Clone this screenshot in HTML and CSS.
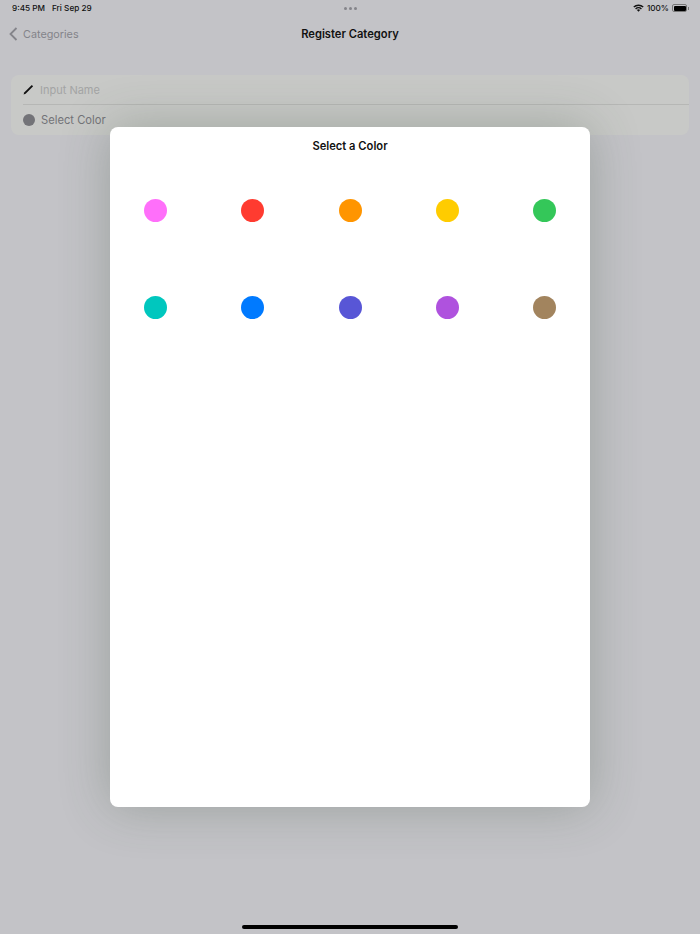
FILE: index.html
```html
<!DOCTYPE html>
<html lang="en">
<head>
  <meta charset="UTF-8">
  <meta name="viewport" content="width=device-width, initial-scale=1.0">
  <title>Register Category</title>
  <link rel="stylesheet" href="styles.css">
</head>
<body>
  <div class="screen">
    <div class="status-bar">
      <div class="status-left">
        <span>9:45 PM</span>
        <span>Fri Sep 29</span>
      </div>
      <div class="status-dots">
        <span class="dot"></span>
        <span class="dot"></span>
        <span class="dot"></span>
      </div>
      <div class="status-right">
        <svg class="wifi" width="11" height="8" viewBox="0 0 11 8">
          <path d="M0.3 2.6 A7.4 7.4 0 0 1 10.7 2.6 L9.7 3.6 A6 6 0 0 0 1.3 3.6 Z" fill="#111"/>
          <path d="M2.1 4.4 A4.9 4.9 0 0 1 8.9 4.4 L7.9 5.4 A3.5 3.5 0 0 0 3.1 5.4 Z" fill="#111"/>
          <path d="M3.9 6.1 A2.3 2.3 0 0 1 7.1 6.1 L5.5 7.8 Z" fill="#111"/>
        </svg>
        <span>100%</span>
        <div class="battery"><div class="battery-fill"></div></div>
        <div class="battery-tip"></div>
      </div>
    </div>

    <div class="nav-bar">
      <div class="nav-back">
        <svg width="9" height="14" viewBox="0 0 9 14">
          <path d="M7.5 1 L1.5 7 L7.5 13" fill="none" stroke="#84848a" stroke-width="1.8"/>
        </svg>
        <span>Categories</span>
      </div>
      <div class="nav-title">Register Category</div>
    </div>

    <div class="form-group">
      <div class="form-row">
        <svg class="pencil" width="11" height="11" viewBox="0 0 11 11">
          <path d="M0.6 10.4 L1.2 8.4 L8.8 0.9 L10.1 2.2 L2.6 9.8 Z" fill="#111"/>
        </svg>
        <span class="placeholder">Input Name</span>
      </div>
      <div class="form-row">
        <span class="color-dot"></span>
        <span class="form-label">Select Color</span>
      </div>
    </div>

    <div class="home-indicator"></div>
  </div>

  <div class="modal">
    <div class="modal-title">Select a Color</div>
    <div class="swatches">
      <div class="swatch pink"></div>
      <div class="swatch red"></div>
      <div class="swatch orange"></div>
      <div class="swatch yellow"></div>
      <div class="swatch green"></div>
      <div class="swatch teal"></div>
      <div class="swatch blue"></div>
      <div class="swatch indigo"></div>
      <div class="swatch purple"></div>
      <div class="swatch brown"></div>
    </div>
  </div>
</body>
</html>
```

FILE: styles.css
```css
body {
  margin: 0;
  padding: 0;
  background-color: #c3c3c7;
  color: #111;
  font-family: 'Inter', 'Liberation Sans', sans-serif;
  height: 934px;
  overflow: hidden;
}

.screen {
  height: 934px;
  display: flex;
  flex-direction: column;
}

.status-bar {
  height: 16px;
  padding: 0 12px;
  display: grid;
  grid-template-columns: 1fr auto 1fr;
  align-items: center;
  font-size: 8.2px;
  font-weight: 500;
}

.status-left {
  display: flex;
  gap: 7px;
}

.status-dots {
  display: flex;
  gap: 2px;
}

.dot {
  width: 3px;
  height: 3px;
  border-radius: 50%;
  background-color: #84848a;
}

.status-right {
  display: flex;
  align-items: center;
  justify-content: flex-end;
  gap: 3px;
  margin-right: -1px;
}

.battery {
  width: 12px;
  height: 5px;
  padding: 0.5px;
  border: 0.5px solid #777;
  border-radius: 2px;
}

.battery-fill {
  height: 100%;
  background-color: #000;
  border-radius: 1px;
}

.battery-tip {
  width: 1px;
  height: 3px;
  margin-left: -2px;
  background-color: #777;
}

.nav-bar {
  position: relative;
  height: 35px;
  display: flex;
  align-items: center;
  justify-content: center;
}

.nav-back {
  position: absolute;
  left: 9px;
  top: 11px;
  display: flex;
  align-items: center;
  gap: 5px;
  font-size: 10.8px;
  color: #84848a;
}

.nav-title {
  font-size: 11.2px;
  font-weight: 600;
}

.form-group {
  margin: 24px 11px 0;
  height: 60px;
  background-color: #c8c9c7;
  border-radius: 8px;
  padding-left: 12px;
}

.form-row {
  height: 30px;
  box-sizing: border-box;
  display: flex;
  align-items: center;
}

.form-row:first-child {
  border-bottom: 1px solid #b6b7b5;
}

.pencil {
  margin-right: 6px;
}

.placeholder {
  font-size: 11px;
  color: #a3a4a4;
}

.color-dot {
  width: 12px;
  height: 12px;
  border-radius: 50%;
  background-color: #737378;
  margin-right: 6px;
}

.form-label {
  font-size: 11.2px;
  color: #737378;
}

.home-indicator {
  width: 216px;
  height: 4px;
  border-radius: 2px;
  background-color: #000;
  margin: auto auto 5px;
}

.modal {
  position: absolute;
  left: 110px;
  top: 127px;
  width: 480px;
  height: 680px;
  background-color: #fff;
  border-radius: 8px;
  box-shadow: 0 0 50px rgba(60, 80, 60, 0.3);
}

.modal-title {
  height: 38px;
  line-height: 38px;
  text-align: center;
  font-size: 11.2px;
  font-weight: 600;
}

.swatches {
  margin-top: 34px;
  padding: 0 34px;
  display: grid;
  grid-template-columns: repeat(5, 23px);
  justify-content: space-between;
  row-gap: 74px;
}

.swatch {
  width: 23px;
  height: 23px;
  border-radius: 50%;
}

.pink { background-color: #ff6ffa; }
.red { background-color: #ff3b30; }
.orange { background-color: #ff9500; }
.yellow { background-color: #ffcc00; }
.green { background-color: #34c759; }
.teal { background-color: #00c7be; }
.blue { background-color: #007aff; }
.indigo { background-color: #5856d6; }
.purple { background-color: #af52de; }
.brown { background-color: #a2845e; }
```
